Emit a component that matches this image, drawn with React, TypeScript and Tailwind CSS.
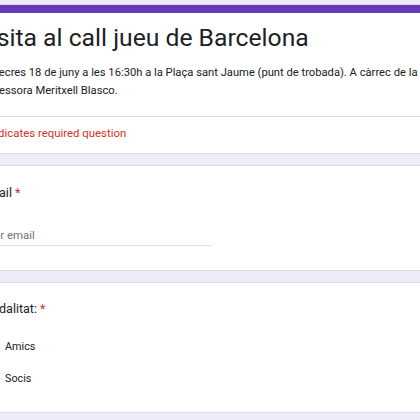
export default function App() {
  return (
    <div className="h-[420px] w-[420px] overflow-hidden bg-[#f0ebf8] pt-[4px] font-['Roboto',sans-serif] text-[#202124]">
      <div className="-ml-[38px] flex w-[520px] flex-col gap-[11px]">
        {/* header card */}
        <section className="overflow-hidden rounded-lg border border-[#dadce0] bg-white">
          <div className="h-[8px] bg-[#673ab7]" />
          <div className="px-[18px] pt-[10px] pb-[16px]">
            <h1 className="-ml-[6px] text-[24.7px] leading-[30px] font-normal">Visita al call jueu de Barcelona</h1>
            <p className="mt-[11px] -ml-[2px] whitespace-nowrap text-[11.2px] leading-[18px]">
              Dimecres 18 de juny a les 16:30h a la Plaça sant Jaume (punt de trobada). A càrrec de la
              <br />
              professora Meritxell Blasco.
            </p>
          </div>
          <div className="border-t border-[#dadce0] px-[18px] pt-[8px] pb-[12px] text-[11.4px] leading-[16px] text-[#d93025]">
            * Indicates required question
          </div>
        </section>

        {/* email */}
        <section className="rounded-lg border border-[#dadce0] bg-white px-[18px] pt-[18px] pb-[24px]">
          <div className="text-[12.5px] leading-[18px]">
            Email <span className="text-[#d93025]">*</span>
          </div>
          <div className="mt-[25px] w-[230px] border-b border-[#e0e0e0] pb-[2px] text-[11.4px] leading-[16px] text-[#70757a]">
            Your email
          </div>
        </section>

        {/* modalitat */}
        <section className="rounded-lg border border-[#dadce0] bg-white px-[18px] pt-[17px] pb-[17px]">
          <div className="text-[12.5px] leading-[18px]">
            Modalitat: <span className="text-[#d93025]">*</span>
          </div>
          <div className="mt-[13px] flex flex-col">
            {["Amics", "Socis"].map((o) => (
              <label key={o} className="flex h-[32px] items-center gap-[8px] text-[10.8px]">
                <span className="h-[16px] w-[16px] shrink-0 rounded-full border-2 border-[#5f6368]" />
                {o}
              </label>
            ))}
          </div>
        </section>
      </div>
    </div>
  );
}
